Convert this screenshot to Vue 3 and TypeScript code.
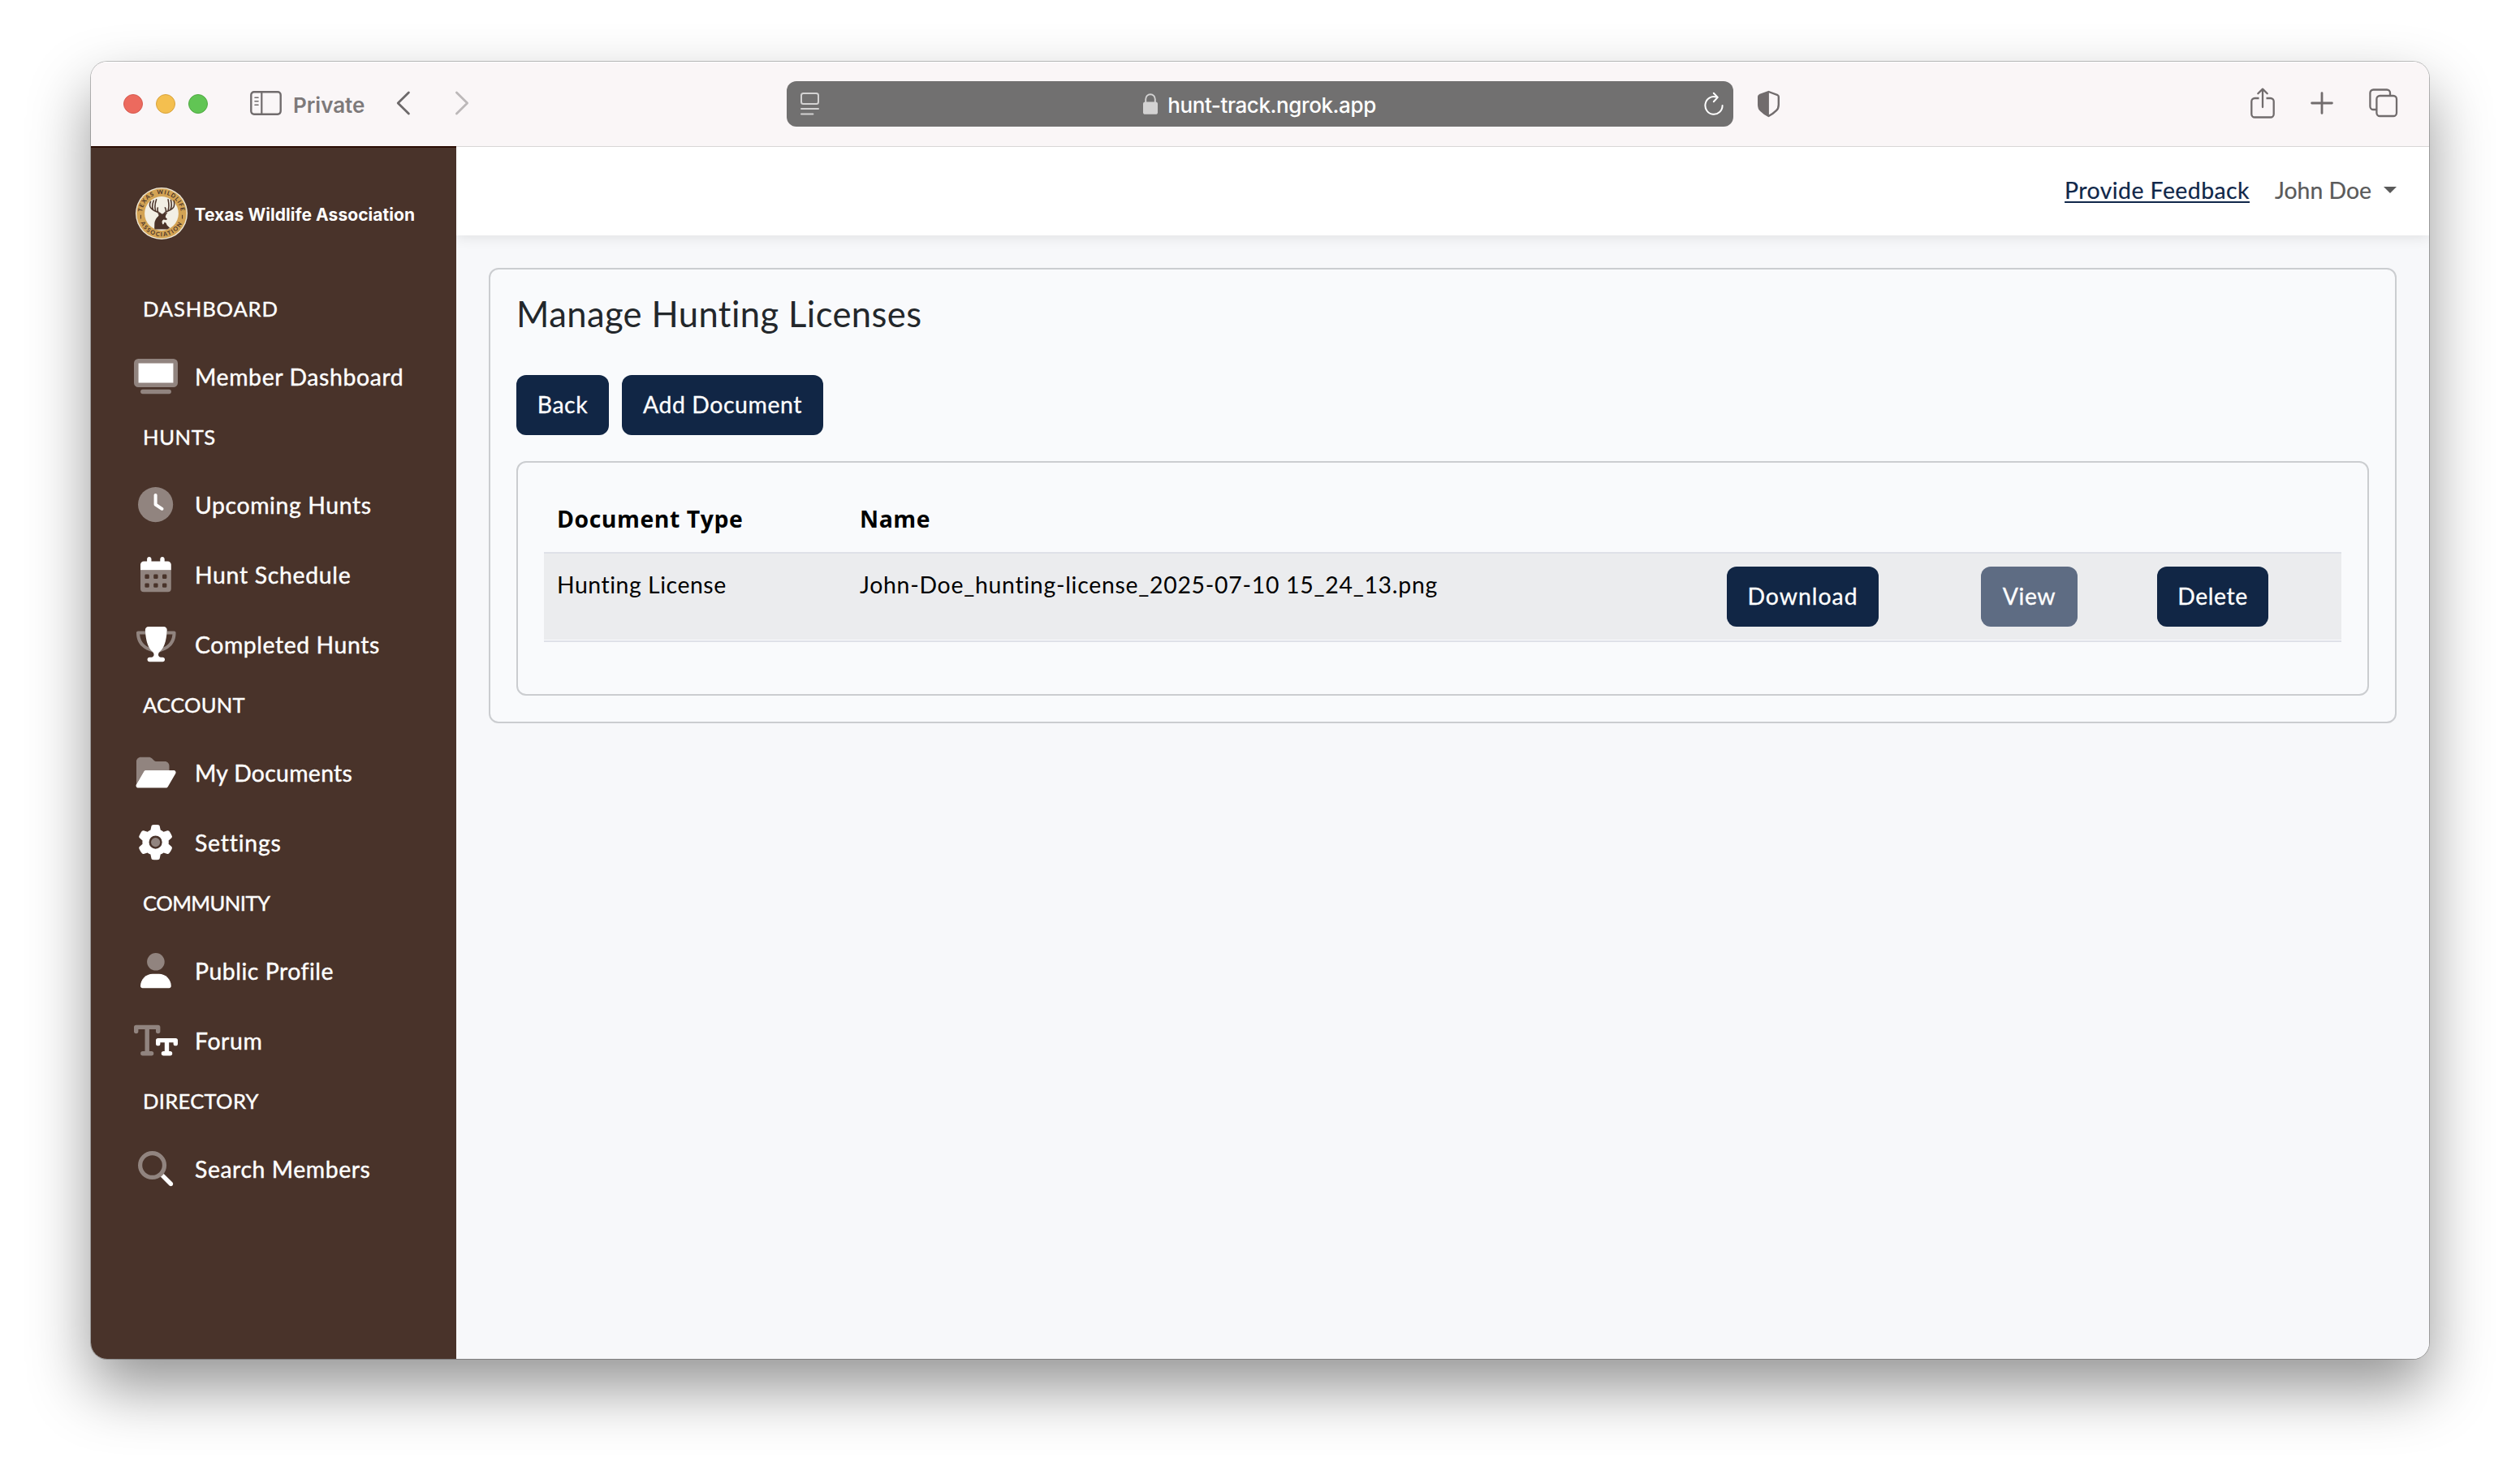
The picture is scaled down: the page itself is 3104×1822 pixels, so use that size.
<script setup lang="ts">
interface NavItem {
  label: string
  icon: string
  tracking: number
}
interface NavGroup {
  title: string
  tracking: number
  items: NavItem[]
}

const groups: NavGroup[] = [
  {
    title: 'Dashboard',
    tracking: 0.86,
    items: [{ label: 'Member Dashboard', icon: 'screen', tracking: 0.62 }],
  },
  {
    title: 'Hunts',
    tracking: 0.6,
    items: [
      { label: 'Upcoming Hunts', icon: 'clock', tracking: 0.6 },
      { label: 'Hunt Schedule', icon: 'calendar', tracking: 0.68 },
      { label: 'Completed Hunts', icon: 'trophy', tracking: 0.57 },
    ],
  },
  {
    title: 'Account',
    tracking: 0.22,
    items: [
      { label: 'My Documents', icon: 'folder', tracking: 0.3 },
      { label: 'Settings', icon: 'gear', tracking: 0.78 },
    ],
  },
  {
    title: 'Community',
    tracking: -0.55,
    items: [
      { label: 'Public Profile', icon: 'user', tracking: 0.52 },
      { label: 'Forum', icon: 'text', tracking: 0.6 },
    ],
  },
  {
    title: 'Directory',
    tracking: 0.28,
    items: [{ label: 'Search Members', icon: 'search', tracking: 0.56 }],
  },
]

const documents = [
  { type: 'Hunting License', name: 'John-Doe_hunting-license_2025-07-10 15_24_13.png' },
]

const iconWidths: Record<string, number> = {
  screen: 640,
  clock: 512,
  calendar: 448,
  trophy: 576,
  folder: 576,
  gear: 512,
  user: 448,
  text: 640,
  search: 512,
}
</script>

<template>
  <div class="desktop">
    <div class="window">
      <header class="toolbar">
        <div class="tb-left">
          <span class="light red"></span>
          <span class="light yellow"></span>
          <span class="light green"></span>
          <svg class="i-sidebar" width="40" height="32" viewBox="0 0 40 32" fill="none" stroke="#716c6d" stroke-linecap="round">
            <rect x="1.3" y="2.3" width="36.4" height="27.4" rx="3.6" stroke-width="2.4" />
            <path d="M14.3 2.5V29.5" stroke-width="2.2" />
            <path d="M6 9.300h4M6 13.800h4M6 18.300h4" stroke-width="1.600" />
          </svg>
          <span class="private">Private</span>
          <svg class="i-back" width="18" height="30" viewBox="0 0 18 30" fill="none" stroke="#6d696a" stroke-width="2.8" stroke-linecap="round" stroke-linejoin="round">
            <path d="M15.4 2L2.2 15L15.4 28" />
          </svg>
          <svg class="i-forward" width="18" height="30" viewBox="0 0 18 30" fill="none" stroke="#bcb8b9" stroke-width="2.8" stroke-linecap="round" stroke-linejoin="round">
            <path d="M2.4 2L15.6 15L2.4 28" />
          </svg>
        </div>
        <div class="address">
          <svg width="24" height="30" viewBox="0 0 24 30" fill="none" stroke="#d3d2d2" stroke-width="2" stroke-linecap="round">
            <rect x="2" y="2" width="21" height="13" rx="2.5" />
            <path d="M2 21H23M2 27.600H16.400" />
          </svg>
          <div class="host">
            <svg width="18" height="26" viewBox="0 0 18 26">
              <rect x="0" y="10.5" width="18" height="15.3" rx="2.6" fill="#d3d2d2" />
              <path d="M3.2 12V7.2a5.8 6 0 0 1 11.6 0V12" fill="none" stroke="#d3d2d2" stroke-width="1.9" />
            </svg>
            <span>hunt-track.ngrok.app</span>
          </div>
          <svg width="24" height="30" viewBox="0 0 24 30" fill="none" stroke="#fff" stroke-width="2" stroke-linecap="round" stroke-linejoin="round">
            <path d="M15 6.500A10.600 10.900 0 1 0 22.600 17" />
            <path d="M11.800 1.800L16.800 6.900L11.800 12.200" />
          </svg>
        </div>
        <svg class="i-shield" width="30" height="34" viewBox="0 0 30 34">
          <path d="M14.5 2L25.6 6.2Q26.8 6.8 26.8 8V18Q26.8 22.6 24 25.2Q20.5 28.8 14.5 32Q8.500 28.8 5 25.200Q2.200 22.600 2.200 18V8Q2.200 6.800 3.400 6.200Z" fill="none" stroke="#716c6d" stroke-width="2.4" stroke-linejoin="round" />
          <path d="M14.9 2V32Q8.500 28.800 5 25.200Q2.200 22.600 2.200 18V8Q2.200 6.800 3.400 6.200Z" fill="#716c6d" />
        </svg>
        <div class="tb-right">
          <svg width="32" height="40" viewBox="0 0 32 40" fill="none" stroke="#716c6d" stroke-width="2.3" stroke-linecap="round" stroke-linejoin="round">
            <path d="M10.500 14H5.300a4 4 0 0 0-4 4V33.500a4 4 0 0 0 4 4H24.700a4 4 0 0 0 4-4V18a4 4 0 0 0-4-4H19.500" stroke-linecap="butt" />
            <path d="M15 25V3M9.300 8.300L15 2.600L20.700 8.300" />
          </svg>
          <svg class="i-plus" width="28" height="28" viewBox="0 0 28 28" fill="none" stroke="#716c6d" stroke-width="2.8" stroke-linecap="round">
            <path d="M14 1.600V26.400M1.600 14H26.400" />
          </svg>
          <svg width="36" height="36" viewBox="0 0 36 36" fill="none" stroke="#716c6d" stroke-width="2.300">
            <rect x="9.400" y="9" width="24.600" height="25" rx="4" />
            <path d="M9.400 26H5.400a4 4 0 0 1-4-4V5.500a4 4 0 0 1 4-4H22a4 4 0 0 1 4 4V9" />
          </svg>
        </div>
      </header>

      <div class="page">
        <aside class="sidebar">
          <div class="brand">
            <svg width="64" height="64" viewBox="0 0 190 190">
              <defs>
                <path id="arc-top" d="M24 95A71 71 0 0 1 166 95" />
                <path id="arc-bottom" d="M11 95A84 84 0 0 0 179 95" />
              </defs>
              <circle cx="95" cy="95" r="95" fill="#f0ead9" />
              <circle cx="95" cy="95" r="91" fill="#d3a354" />
              <circle cx="95" cy="95" r="62" fill="#f2efe4" />
              <text class="seal" letter-spacing="3"><textPath href="#arc-top" startOffset="50%" text-anchor="middle">TEXAS WILDLIFE</textPath></text>
              <text class="seal" letter-spacing="4.600"><textPath href="#arc-bottom" startOffset="50%" text-anchor="middle">ASSOCIATION</textPath></text>
              <path d="M19 100V114M171 100V114" stroke="#4a3329" stroke-width="3" />
              <g fill="none" stroke="#4a3329" stroke-linecap="round" stroke-width="4.600">
                <path d="M93 97C84 88 60 88 53 70Q50 60 55 52M64 82Q58 68 66 48M74 87Q67 70 76 44M83 91Q79 84 81 74" />
                <path d="M104 95C110 84 134 86 140 70Q143 60 140 48M128 79Q134 66 129 46M119 83Q124 68 119 44M111 89Q112 80 108 74" />
              </g>
              <path d="M80 93L94 97L103 95L117 91L111 100L109 108L116 116L112 119L102 117Q94 122 98 132Q101 140 106 126Q112 128 115 138L125 148L116 153H70Q68 148 69 140Q68 122 78 110Q84 106 85 101Z" fill="#4a3329" />
            </svg>
            <span>Texas Wildlife Association</span>
          </div>
          <nav>
            <section v-for="g in groups" :key="g.title">
              <h2 :style="{ letterSpacing: g.tracking + 'px' }">{{ g.title }}</h2>
              <a v-for="item in g.items" :key="item.label" class="nav-item">
                <span class="nav-icon">
                  <svg :viewBox="`0 0 ${iconWidths[item.icon]} 512`" height="43.2" fill="#fff">
                    <template v-if="item.icon === 'screen'">
                      <path class="dim" fill-rule="evenodd" d="M64 0H576a64 64 0 0 1 64 64V352a64 64 0 0 1-64 64H64a64 64 0 0 1-64-64V64A64 64 0 0 1 64 0zM64 64V352H576V64z" />
                      <rect class="dim" x="96" y="448" width="448" height="64" rx="32" />
                      <rect x="64" y="64" width="512" height="288" />
                    </template>
                    <template v-else-if="item.icon === 'clock'">
                      <circle class="dim" cx="256" cy="256" r="256" />
                      <path d="M232 120c0-13.300 10.700-24 24-24s24 10.700 24 24V243.200l82.700 55.100c11 7.400 14 22.300 6.700 33.300s-22.300 14-33.300 6.700l-93.300-62.200c-6.700-4.500-10.700-12-10.700-20V120z" />
                    </template>
                    <template v-else-if="item.icon === 'calendar'">
                      <path class="dim" fill-rule="evenodd" d="M0 192H448V464a48 48 0 0 1-48 48H48a48 48 0 0 1-48-48zM80 256a16 16 0 0 0-16 16v32a16 16 0 0 0 16 16h32a16 16 0 0 0 16-16v-32a16 16 0 0 0-16-16zM208 256a16 16 0 0 0-16 16v32a16 16 0 0 0 16 16h32a16 16 0 0 0 16-16v-32a16 16 0 0 0-16-16zM336 256a16 16 0 0 0-16 16v32a16 16 0 0 0 16 16h32a16 16 0 0 0 16-16v-32a16 16 0 0 0-16-16zM80 384a16 16 0 0 0-16 16v32a16 16 0 0 0 16 16h32a16 16 0 0 0 16-16v-32a16 16 0 0 0-16-16zM208 384a16 16 0 0 0-16 16v32a16 16 0 0 0 16 16h32a16 16 0 0 0 16-16v-32a16 16 0 0 0-16-16zM336 384a16 16 0 0 0-16 16v32a16 16 0 0 0 16 16h32a16 16 0 0 0 16-16v-32a16 16 0 0 0-16-16z" />
                      <path d="M96 32V64H48C21.500 64 0 85.500 0 112v80H448V112c0-26.500-21.500-48-48-48H352V32c0-17.700-14.300-32-32-32s-32 14.300-32 32V64H160V32c0-17.700-14.300-32-32-32S96 14.300 96 32z" />
                    </template>
                    <template v-else-if="item.icon === 'trophy'">
                      <path class="dim" d="M129.600 64H24C10.700 64 0 74.700 0 88c0 92.600 33.500 157 78.500 200.700c44.300 43.100 98.300 64.800 138.100 75.800L250 380L185 302.600c-24.900-11-50.800-26.500-73.200-48.300c-32-31.100-58-76-63-142.300h84.400zM446.400 64H552c13.300 0 24 10.700 24 24c0 92.600-33.500 157-78.500 200.700c-44.300 43.100-98.300 64.800-138.100 75.800L326 380L391 302.600c24.900-11 50.800-26.500 73.200-48.300c32-31.100 58-76 63-142.300h-84.400z" />
                      <path d="M176 0H400c26.500 0 48.100 21.800 47.100 48.200C440.500 223 395 320 345 362Q320 382 320 410.100c0 20.900 17 37.900 37.900 37.900H384c17.700 0 32 14.300 32 32s-14.300 32-32 32H192c-17.700 0-32-14.300-32-32s14.300-32 32-32h26.100c20.900 0 37.900-17 37.900-37.900Q256 382 231 362C181 320 135.500 223 128.900 48.200C127.900 21.800 149.500 0 176 0z" />
                    </template>
                    <template v-else-if="item.icon === 'folder'">
                      <path class="dim" d="M0 378V96C0 60.700 28.700 32 64 32H181.500c17 0 33.300 6.700 45.300 18.700l26.500 26.500c12 12 28.300 18.700 45.300 18.700H416c35.300 0 64 28.700 64 64v64H138c-11.400 0-21.900 6-27.600 15.900L0 428z" />
                      <path d="M110.300 239.900C116.100 230 126.600 224 138 224H544c11.500 0 22 6.100 27.700 16.100s5.700 22.200-.1 32.100l-112 192C453.900 474 443.400 480 432 480H26c-11.500 0-22-6.100-27.700-16.100s-5.700-22.200 .1-32.100z" />
                    </template>
                    <template v-else-if="item.icon === 'gear'">
                      <path fill-rule="evenodd" d="M495.900 166.600c3.200 8.700 .5 18.400-6.400 24.600l-43.300 39.400c1.100 8.300 1.700 16.800 1.700 25.400s-.6 17.100-1.700 25.400l43.300 39.400c6.900 6.200 9.600 15.900 6.400 24.600c-4.400 11.900-9.700 23.300-15.800 34.300l-4.700 8.100c-6.600 11-14 21.400-22.100 31.200c-5.900 7.200-15.700 9.600-24.500 6.800l-55.700-17.700c-13.400 10.300-28.200 18.900-44 25.400l-12.500 57.100c-2 9.100-9 16.300-18.200 17.800c-13.800 2.300-28 3.500-42.500 3.500s-28.700-1.200-42.500-3.500c-9.200-1.500-16.200-8.700-18.200-17.800l-12.500-57.100c-15.800-6.500-30.600-15.100-44-25.400L83.100 425.900c-8.800 2.800-18.600 .3-24.500-6.800c-8.100-9.800-15.500-20.200-22.100-31.200l-4.700-8.100c-6.100-11-11.400-22.400-15.800-34.300c-3.200-8.700-.5-18.400 6.400-24.600l43.300-39.400C64.600 273.100 64 264.600 64 256s.6-17.100 1.700-25.400L22.400 191.200c-6.900-6.200-9.600-15.900-6.400-24.600c4.400-11.900 9.700-23.300 15.800-34.300l4.700-8.100c6.600-11 14-21.400 22.100-31.200c5.900-7.200 15.700-9.600 24.500-6.800l55.700 17.700c13.400-10.300 28.200-18.900 44-25.400l12.500-57.100c2-9.100 9-16.300 18.200-17.800C227.300 1.200 241.500 0 256 0s28.700 1.200 42.500 3.500c9.200 1.500 16.200 8.700 18.200 17.800l12.500 57.100c15.800 6.500 30.600 15.100 44 25.400l55.700-17.700c8.800-2.800 18.600-.3 24.500 6.800c8.100 9.800 15.500 20.200 22.100 31.200l4.700 8.100c6.100 11 11.400 22.400 15.800 34.300zM256 352a96 96 0 1 0 0-192 96 96 0 1 0 0 192z" />
                      <circle class="dim" cx="256" cy="256" r="66" />
                    </template>
                    <template v-else-if="item.icon === 'user'">
                      <circle class="dim" cx="224" cy="128" r="128" />
                      <path d="M178.300 304C79.800 304 0 383.800 0 482.300C0 498.700 13.300 512 29.700 512H418.300c16.400 0 29.700-13.300 29.700-29.700C448 383.800 368.200 304 269.700 304H178.300z" />
                    </template>
                    <template v-else-if="item.icon === 'text'">
                      <g fill="none" stroke="#fff" stroke-width="64" stroke-linecap="round" stroke-linejoin="round">
                        <path class="dim" d="M32 124V64H352V124M192 64V448M128 448H256" />
                        <path d="M352 304V256H608V304M480 256V448M432 448H528" />
                      </g>
                    </template>
                    <template v-else>
                      <circle class="dim" cx="208" cy="208" r="177" fill="none" stroke="#fff" stroke-width="62" />
                      <path d="M330.700 376L457.400 502.600c12.500 12.500 32.800 12.500 45.300 0s12.500-32.800 0-45.300L376 330.700C363.300 348 348 363.300 330.700 376z" />
                    </template>
                  </svg>
                </span>
                <span :style="{ letterSpacing: item.tracking + 'px' }">{{ item.label }}</span>
              </a>
            </section>
          </nav>
        </aside>

        <main>
          <div class="topbar">
            <a class="feedback">Provide Feedback</a>
            <span class="account">John Doe</span>
            <span class="caret"></span>
          </div>
          <div class="card">
            <h1>Manage Hunting Licenses</h1>
            <div class="actions">
              <button class="btn back">Back</button>
              <button class="btn add">Add Document</button>
            </div>
            <div class="panel">
              <div class="tr head">
                <span>Document Type</span>
                <span>Name</span>
              </div>
              <div v-for="d in documents" :key="d.name" class="tr row">
                <span class="doc-type">{{ d.type }}</span>
                <span class="doc-name">{{ d.name }}</span>
                <button class="btn download">Download</button>
                <button class="btn view" disabled>View</button>
                <button class="btn delete">Delete</button>
              </div>
            </div>
          </div>
        </main>
      </div>
    </div>
  </div>
</template>

<style>
body {
  background: #fff;
}
</style>

<style scoped>
* {
  box-sizing: border-box;
}
.desktop {
  width: 3104px;
  height: 1822px;
  padding: 76px 112px 0;
  overflow: hidden;
  background: #fff;
  font-family: Lato, 'Open Sans', sans-serif;
  font-size: 28.4px;
}
.window {
  display: flex;
  flex-direction: column;
  height: 1598px;
  border-radius: 20px;
  overflow: hidden;
  box-shadow: 0 0 0 1px rgba(0, 0, 0, 0.24), 0 36px 76px rgba(0, 0, 0, 0.42);
}
.toolbar {
  display: flex;
  align-items: center;
  height: 104px;
  flex: none;
  background: #faf6f7;
  font-family: Inter, sans-serif;
  font-size: 26px;
  box-shadow: inset 0 1px 0 #fff;
}
.tb-left {
  display: flex;
  align-items: center;
  width: 857px;
  padding-left: 40px;
}
.light {
  width: 24px;
  height: 24px;
  margin-right: 16px;
  border-radius: 50%;
  border: 1px solid;
}
.red {
  background: #ec6a5e;
  border-color: #d65a50;
}
.yellow {
  background: #f4bf4f;
  border-color: #d8a33c;
}
.green {
  background: #61c554;
  border-color: #51a843;
}
.i-sidebar {
  margin: -2px 0 0 36px;
}
.private {
  margin: 2px 0 0 13px;
  width: 88px;
  font-weight: 600;
  letter-spacing: 0;
  color: #7d797a;
}
.i-back {
  margin: -2px 0 0 39px;
}
.i-forward {
  margin: -2px 0 0 54px;
}
.address {
  display: flex;
  align-items: center;
  justify-content: space-between;
  width: 1166px;
  height: 56px;
  padding: 0 12px 0 16px;
  border-radius: 12px;
  background: #717070;
  color: #fff;
}
.host {
  display: flex;
  align-items: center;
  gap: 12px;
  margin-right: 5px;
  font-weight: 500;
  letter-spacing: -0.4px;
}
.host span {
  margin-top: 2px;
}
.i-shield {
  margin-left: 29px;
}
.tb-right {
  display: flex;
  align-items: center;
  margin-left: auto;
  padding-right: 38px;
  margin-top: -3px;
}
.i-plus {
  margin: 0 44px 0 42px;
}
.page {
  display: flex;
  flex: 1;
  min-height: 0;
}
.sidebar {
  width: 450px;
  flex: none;
  background: #49332a;
  box-shadow: inset 0 2px 0 #2b0d04;
  color: #fff;
}
.brand {
  display: flex;
  align-items: center;
  gap: 9px;
  height: 168px;
  padding: 0 0 2px 54.5px;
  font: 700 21px Inter, sans-serif;
  letter-spacing: 0.06px;
}
.brand span {
  margin-top: 2px;
}
.seal {
  font: 700 21.5px Lato, sans-serif;
  fill: #4a3329;
}
h2 {
  height: 72px;
  margin: 0;
  padding: 16px 0 0 64px;
  font-size: 25.6px;
  font-weight: 400;
  line-height: 32px;
  text-transform: uppercase;
  -webkit-text-stroke: 0.4px;
}
.nav-item {
  display: flex;
  align-items: center;
  height: 86px;
  padding-left: 52px;
  line-height: 34px;
  -webkit-text-stroke: 0.4px;
}
.nav-icon {
  display: flex;
  justify-content: center;
  width: 56px;
  margin: 1px 20px 0 0;
}
.nav-icon svg {
  overflow: visible;
}
.nav-icon + span {
  margin-top: 1px;
}
.dim {
  opacity: 0.4;
}
main {
  flex: 1;
  overflow: hidden;
  background: #f7f8fa;
}
.topbar {
  display: flex;
  align-items: center;
  justify-content: flex-end;
  height: 110px;
  padding-right: 40px;
  background: #fff;
  border-top: 1px solid #d8d6d7;
  box-shadow: 0 2px 16px rgba(0, 0, 0, 0.1);
  line-height: 34px;
}
.feedback {
  color: #10274a;
  letter-spacing: 0.46px;
  text-decoration: underline;
  text-decoration-thickness: 2px;
  text-underline-offset: 2.5px;
  text-decoration-skip-ink: none;
}
.account {
  margin-left: 31px;
  color: #5a5a5a;
}
.topbar .feedback,
.topbar .account {
  margin-top: -4px;
  -webkit-text-stroke: 0.2px;
}
.caret {
  margin: -4px 0 0 15px;
  border: 8px solid transparent;
  border-top-color: #5a5a5a;
  border-bottom: 0;
}
.card {
  height: 561px;
  margin: 40px;
  padding: 32px;
  border: 2px solid #cbcdd0;
  border-radius: 12px;
  background: #f9fafc;
}
h1 {
  height: 42px;
  margin: 0 0 56px;
  padding-top: 1px;
  font-size: 43.5px;
  font-weight: 400;
  line-height: 42px;
  letter-spacing: 0.42px;
  color: #23272b;
}
.actions {
  display: flex;
  gap: 16px;
}
.btn {
  height: 74px;
  padding: 0 0 3px;
  border: 0;
  border-radius: 12px;
  background: #112645;
  color: #fff;
  font: inherit;
  letter-spacing: 0.58px;
  -webkit-text-stroke: 0.3px;
}
.back {
  width: 114px;
}
.add {
  width: 248px;
}
.panel {
  height: 289px;
  margin-top: 32px;
  padding: 32px;
  border: 2px solid #cbcdd0;
  border-radius: 12px;
}
.tr {
  display: grid;
  grid-template-columns: 373px 1068px 313px 217px 243px;
  color: #000;
}
.tr > span {
  padding-left: 16px;
}
.head {
  height: 80px;
  border-bottom: 2px solid #dfe1e8;
  font-family: 'Open Sans', sans-serif;
  font-weight: 700;
  line-height: 75px;
  letter-spacing: 0.55px;
}
.row {
  height: 109px;
  padding-top: 16px;
  border-bottom: 2px solid #dfe1e8;
  background: linear-gradient(#ebecee 106px, #f9fafc 106px);
  line-height: 44px;
}
.doc-type {
  letter-spacing: 0.54px;
}
.doc-name {
  letter-spacing: 0.73px;
}
.row .btn {
  margin-left: 16px;
  line-height: normal;
}
.download {
  width: 187px;
  letter-spacing: 1px;
}
.view {
  width: 119px;
  background: #5e6c83;
}
.delete {
  width: 137px;
}
</style>
